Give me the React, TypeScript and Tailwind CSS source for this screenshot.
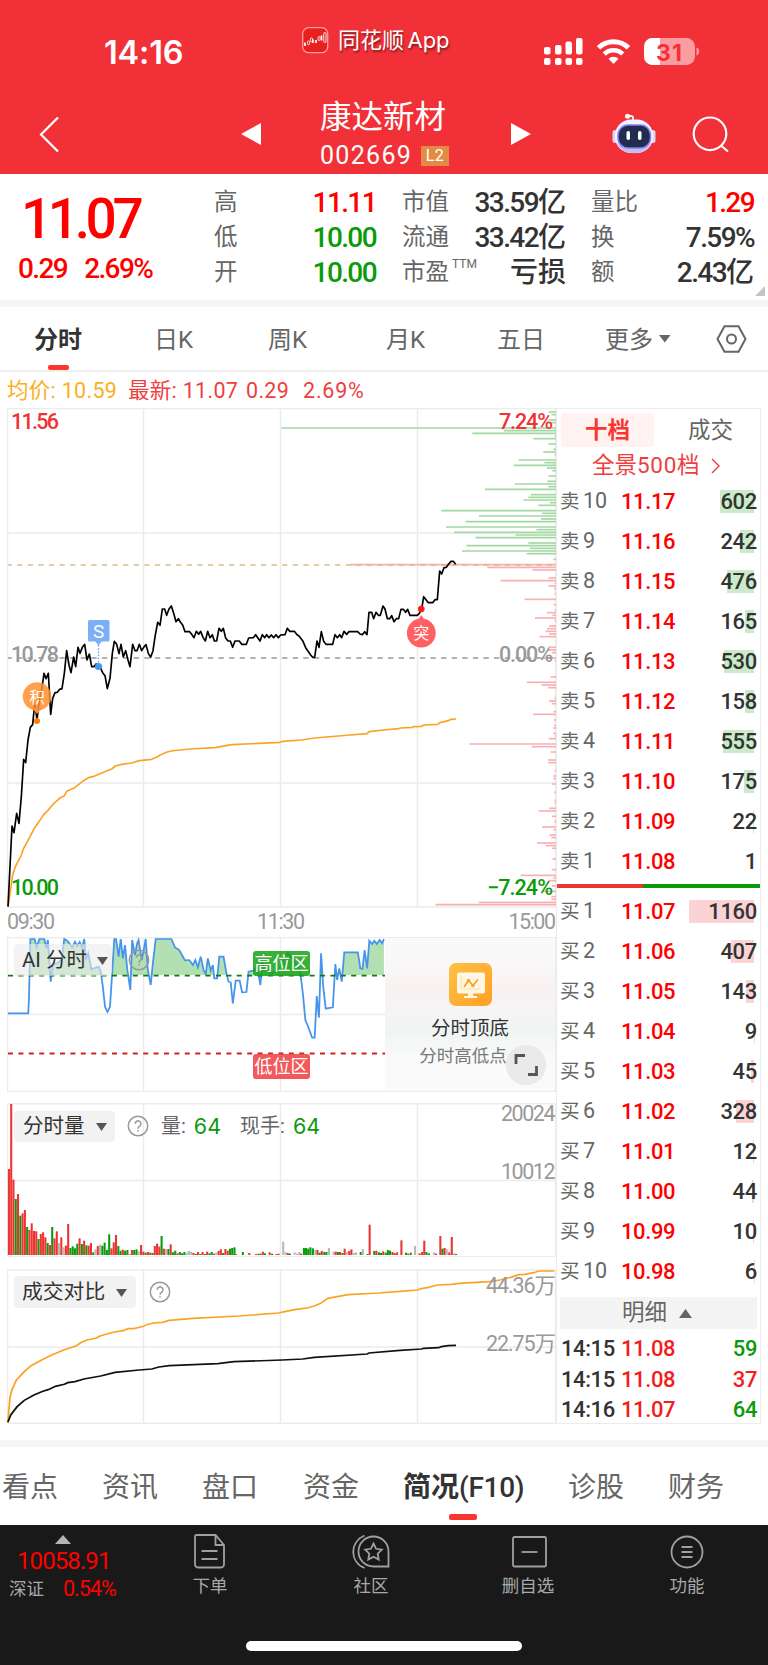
import React from 'react';

const PRICE_LINE =
  '24,1520 32,1360 36,1278 42,1298 50,1240 57,1270 64,1190 71,1078 77,1088 84,1020 91,982 98,974 104,910 111,958 118,900 125,870 132,820 138,836 145,820 152,943 158,895 165,878 172,877 179,868 186,866 193,820 200,752 207,795 213,818 221,771 227,800 234,742 240,760 247,742 254,733 261,780 268,762 275,800 282,800 288,792 295,795 302,805 308,818 315,827 322,866 330,835 337,760 343,724 350,733 357,761 363,733 370,771 377,752 384,780 390,800 398,733 405,752 411,752 418,733 425,752 431,742 438,734 445,760 452,772 459,752 466,705 473,667 480,676 487,627 494,627 500,646 507,627 514,618 521,640 528,665 535,656 541,666 548,675 555,695 569,695 575,703 582,713 589,694 596,703 602,694 609,712 616,723 623,694 630,713 637,704 643,723 650,723 657,685 664,694 670,685 677,714 684,723 691,723 698,742 705,723 718,723 725,733 739,733 746,714 760,713 767,704 780,723 787,704 794,713 800,704 807,713 814,705 821,713 828,704 835,713 842,705 855,704 862,685 869,694 883,694 890,703 897,708 908,722 917,743 932,765 938,772 944,772 951,723 957,742 964,695 971,724 978,733 998,733 1005,704 1012,713 1019,704 1025,713 1032,694 1040,703 1047,695 1073,695 1080,702 1087,704 1094,695 1101,704 1107,637 1115,637 1121,656 1128,637 1135,646 1141,646 1149,618 1155,627 1162,656 1169,656 1175,647 1182,665 1189,656 1196,656 1203,628 1210,628 1217,637 1223,628 1230,646 1252,646 1258,640 1265,627 1271,590 1278,599 1285,608 1298,608 1305,599 1312,599 1319,513 1325,522 1332,503 1339,502 1346,492 1353,484 1360,484 1367,493';

const AVG_LINE =
  '24,1520 33,1460 38,1425 45,1403 52,1388 62,1370 71,1345 90,1310 104,1283 117,1265 131,1244 145,1230 152,1221 165,1207 180,1194 193,1187 200,1174 224,1163 248,1144 268,1132 282,1129 318,1114 335,1107 346,1098 365,1093 395,1089 418,1082 455,1078 473,1070 480,1065 500,1057 512,1053 570,1047 645,1043 695,1034 840,1027 848,1024 905,1020 943,1014 1050,1005 1101,1001 1107,995 1150,990 1195,986 1203,984 1236,982 1242,980 1265,979 1272,975 1313,973 1320,968 1345,962 1353,958 1368,957';

const AI_LINE =
  '22,280 79,280 81,240 85,57 97,57 103,82 110,57 124,57 130,85 134,60 138,120 142,185 148,135 155,130 160,130 166,125 172,120 180,57 188,62 194,70 202,82 210,65 216,78 223,66 230,82 236,57 240,120 247,100 256,148 270,142 277,140 282,155 288,200 294,260 301,276 308,260 314,160 320,57 325,57 332,110 338,57 344,115 350,75 356,145 365,210 370,60 378,105 384,70 388,60 397,120 404,80 408,57 414,150 422,195 428,130 436,57 480,57 490,82 502,90 518,121 530,120 540,135 547,120 554,142 562,110 570,150 576,162 582,115 590,152 596,135 600,175 608,175 614,110 626,110 634,160 640,185 646,187 652,250 660,182 671,182 678,217 690,216 696,155 710,152 718,140 722,150 729,195 735,130 760,160 780,150 806,97 840,150 848,220 855,300 862,318 868,335 874,353 881,353 884,290 887,228 893,293 899,100 905,200 912,266 932,262 939,132 944,180 950,145 957,185 964,97 1002,97 1009,145 1015,147 1021,90 1028,145 1034,62 1042,72 1048,62 1055,72 1063,60 1070,70 1075,57';

const COMPARE_PREV =
  '22,487 28,412 34,388 46,360 66,337 86,318 118,299 145,285 180,269 214,257 228,247 244,240 270,234 280,228 320,216 345,212 358,206 375,206 402,199 410,194 430,189 455,187 474,181 540,175 670,168 780,159 800,154 830,148 860,144 880,138 898,130 918,115 975,104 1060,99 1120,94 1168,90 1180,86 1200,82 1225,75 1265,73 1285,70 1370,65 1400,60 1430,52 1453,44 1470,43 1495,38 1508,33 1552,33';

const COMPARE_TODAY =
  '22,487 30,465 48,440 68,421 95,405 120,394 135,389 155,379 180,373 190,368 210,365 235,357 282,348 322,337 390,330 425,327 445,321 474,317 610,311 655,305 790,300 848,297 880,292 1028,282 1033,279 1120,271 1180,267 1186,265 1228,263 1236,260 1255,257 1277,256';

// order queue bars: [y, left edge]
const SELL_DEPTH = [
  [36, 866], [44, 874], [60, 866], [68, 862], [84, 64], [92, 732], [100, 637], [108, 884], [116, 820], [132, 866], [148, 880], [156, 850], [164, 884],
  [180, 776], [188, 853], [196, 761], [204, 861], [212, 877], [228, 866], [244, 862], [252, 765], [260, 865], [268, 675], [284, 813], [292, 805],
  [300, 790], [308, 870], [316, 835], [332, 544], [340, 846], [348, 657], [357, 843], [365, 616], [381, 558], [389, 829], [397, 582], [405, 766],
  [413, 646], [429, 805], [437, 619], [445, 810], [453, 606], [461, 800], [478, 880],
];

const BUY_DEPTH = [
  [494, 270], [502, 682], [510, 818], [534, 866], [542, 722], [550, 884], [558, 866], [566, 882], [582, 884], [598, 794], [614, 881], [630, 884],
  [638, 861], [646, 877], [654, 825], [662, 884], [678, 867], [686, 861], [694, 857], [702, 867], [710, 838], [742, 864], [750, 862], [758, 875],
  [774, 846], [782, 884], [831, 872], [847, 800], [855, 845], [863, 865], [895, 884], [903, 867], [911, 876], [935, 880], [943, 819], [960, 882],
  [976, 882], [984, 880], [1000, 880], [1008, 884], [1016, 866], [1032, 628], [1040, 815], [1056, 872], [1080, 864], [1088, 865], [1112, 884],
  [1128, 880], [1136, 880], [1152, 875], [1177, 882], [1201, 884], [1209, 884], [1225, 867], [1233, 836], [1249, 876], [1265, 883], [1281, 846],
  [1289, 880], [1305, 868], [1313, 874], [1329, 831], [1337, 857], [1345, 876], [1377, 877], [1409, 875], [1426, 782], [1434, 880], [1442, 865],
  [1458, 876], [1474, 848], [1490, 874], [1498, 874], [1507, 656], [1514, 526],
];

// one bar per minute: colour + top
const VOLUME_OPEN =
  'r237 r42 r269 g327 r312 g377 r370 r360 g411 r420 r400 r423 r424 g447 r432 r427 r442 g459 r465 g411 r445 r424 n459 r442 n472 r467 r402 g474 g469 g475 g461 r445 g462 r452 g466 r467 r459 g487 n478 r468 n464 g467 g458 g480 g433 r475 r457 r435 g468 g482 r479 g482 g480 r493 r480 g480 g478 n484 r465 r485 g488 r486 r488 g489 r468 r461 r470 g438 r476 n477 g477 r463 g487 g482 r490 g486 g490 g486 n488 n483 n485 r489 g492 r486 g492 r486 g492 r485 g490 g486 r491 n488 r483 r478 g489 r477 r482 g476 g474 g472'.split(' ');

const VOLUME_REST: [number, string][] = [
  [660, 'r492'], [680, 'g486'], [698, 'r489'], [717, 'r492'], [724, 'g491'], [730, 'r491'], [736, 'r485'], [742, 'g490'], [755, 'r487'], [762, 'g491'], [774, 'r492'], [780, 'r491'], [793, 'n455'], [800, 'n486'],
  [806, 'r489'], [812, 'g491'], [825, 'n487'], [832, 'n491'], [838, 'n486'], [843, 'r491'], [851, 'g474'], [857, 'g474'], [863, 'g476'], [869, 'g472'], [876, 'g475'], [883, 'n480'], [889, 'r480'],
  [895, 'g488'], [901, 'r483'], [908, 'g486'], [914, 'g486'], [921, 'n474'], [934, 'n485'], [940, 'r485'], [946, 'g486'], [952, 'r486'], [959, 'g489'], [965, 'r476'], [972, 'n486'], [978, 'r483'],
  [984, 'r478'], [991, 'n489'], [997, 'n487'], [1010, 'g486'], [1016, 'n477'], [1029, 'g492'], [1035, 'r404'], [1048, 'g483'], [1054, 'r482'], [1061, 'g487'], [1067, 'g489'], [1073, 'r484'], [1080, 'g488'],
  [1086, 'g480'], [1092, 'g482'], [1099, 'r486'], [1105, 'r489'], [1112, 'r487'], [1124, 'r451'], [1137, 'g488'], [1143, 'r491'], [1150, 'g488'], [1162, 'n468'], [1175, 'r490'], [1182, 'r486'],
  [1188, 'r452'], [1194, 'g486'], [1201, 'g490'], [1215, 'n487'], [1221, 'r491'], [1233, 'r438'], [1239, 'g476'], [1245, 'r474'], [1251, 'n478'], [1258, 'r487'], [1265, 'r441'], [1271, 'n490'], [1277, 'g492'],
];

const VOLUME = [...VOLUME_OPEN.map((v, i): [number, string] => [25 + i * 6.38, v]), ...VOLUME_REST];

const BAR_COLORS: Record<string, string> = { r: '#ee3333', g: '#0a9a0a', n: '#b8b8b8' };

const sells: [number, string, number][] = [
  [10, '11.17', 602], [9, '11.16', 242], [8, '11.15', 476], [7, '11.14', 165], [6, '11.13', 530],
  [5, '11.12', 158], [4, '11.11', 555], [3, '11.10', 175], [2, '11.09', 22], [1, '11.08', 1],
];

const buys: [number, string, number][] = [
  [1, '11.07', 1160], [2, '11.06', 407], [3, '11.05', 143], [4, '11.04', 9], [5, '11.03', 45],
  [6, '11.02', 328], [7, '11.01', 12], [8, '11.00', 44], [9, '10.99', 10], [10, '10.98', 6],
];

const details = [
  { time: '14:15', price: '11.08', qty: '59', color: 'text-[#0a9a0a]' },
  { time: '14:15', price: '11.08', qty: '37', color: 'text-[#f41c1c]' },
  { time: '14:16', price: '11.07', qty: '64', color: 'text-[#0a9a0a]' },
];

const StatusBar = () => (
  <div className="flex h-[90px] items-start text-white">
    <div className="ml-[104px] mt-[33px] w-[198px] font-[Inter] text-[32.5px] font-semibold leading-[40px] tracking-[-0.2px]">14:16</div>
    <svg className="mt-[27px]" width="27" height="27" viewBox="0 0 27 27" fill="none">
      <rect x="0.7" y="0.7" width="25" height="25" rx="6" fill="#e8201f" stroke="#f9a09f" strokeWidth="1.3" />
      <path d="M3 15.500v3.500M11 12.500v3.500M14 13v3M19.500 8.500v5" stroke="#fff" strokeWidth="1.700" />
      <rect x="5.600" y="13.800" width="2" height="4" rx="1" stroke="#fff" strokeWidth="0.800" />
      <rect x="8.500" y="10.800" width="2" height="4" rx="1" stroke="#fff" strokeWidth="0.800" />
      <rect x="16" y="9.500" width="2" height="4" rx="1" stroke="#fff" strokeWidth="0.800" />
      <rect x="21.800" y="5.500" width="2.200" height="10" rx="1.100" stroke="#fff" strokeWidth="0.900" />
    </svg>
    <div className="ml-[9px] mt-[24px] w-[206px] whitespace-nowrap text-[22px] leading-[32px] [text-shadow:1px_2px_2px_rgba(0,0,0,0.45)]">
      同花顺 <span className="-ml-0.5 font-[Inter] tracking-[0px]">App</span>
    </div>
    <svg className="mt-[36px]" width="160" height="32" viewBox="0 0 160 32">
      <g fill="#fff">
        <rect x="0" y="11" width="6.500" height="7.500" rx="2" />
        <rect x="11" y="9" width="6.500" height="9.500" rx="2" />
        <rect x="21.500" y="5.500" width="6.500" height="13" rx="2" />
        <rect x="32" y="2" width="6.500" height="16.500" rx="2" />
        <rect x="0" y="22" width="6.500" height="7" rx="2" />
        <rect x="11" y="22" width="6.500" height="7" rx="2" />
        <rect x="21.500" y="22" width="6.500" height="7" rx="2" />
        <rect x="32" y="22" width="6.500" height="7" rx="2" />
      </g>
      <g fill="none" stroke="#fff" strokeWidth="5">
        <path d="M54.500 11.800a21.500 21.500 0 0 1 30 0" />
        <path d="M60.300 18a13 13 0 0 1 18.400 0" strokeWidth="4.600" />
      </g>
      <path d="M69.500 28l-5-5.200a7 7 0 0 1 10 0z" fill="#fff" />
      <rect x="100" y="2" width="51" height="27" rx="8.500" fill="#f99da0" />
      <path d="M108.500 2H116v27h-7.500a8.500 8.500 0 0 1-8.500-8.500v-10a8.500 8.500 0 0 1 8.500-8.500z" fill="#fff" />
      <path d="M152.500 11.500c3.600 1 3.600 7 0 8z" fill="#f99da0" />
      <text x="125" y="24.500" textAnchor="middle" fill="#f23037" className="font-[Inter] text-[23px] font-bold" textLength="26">31</text>
    </svg>
  </div>
);

const Robot = () => (
  <svg width="44" height="42" viewBox="0 0 44 42">
    <path d="M21 8V4.500Q21 2.500 16 3" fill="none" stroke="#fff" strokeWidth="1.800" />
    <circle cx="15.500" cy="3.300" r="2.500" fill="#fff" />
    <rect x="0.500" y="17" width="5" height="13" rx="2.500" fill="#d8d8f6" />
    <rect x="38.500" y="17" width="5" height="13" rx="2.500" fill="#d8d8f6" />
    <rect x="3" y="6.500" width="38" height="33.500" rx="16" fill="#f3f2ff" />
    <path d="M5 29c5 8 29 8 34 0-3 15-31 15-34 0z" fill="#bfc0ee" />
    <rect x="6" y="12" width="32.500" height="23" rx="10" fill="#222b50" stroke="#8a7bf0" strokeWidth="1.500" />
    <rect x="14.500" y="18" width="3.500" height="9" rx="1.700" fill="#fff" />
    <rect x="26" y="18" width="3.500" height="9" rx="1.700" fill="#fff" />
  </svg>
);

const Header = () => (
  <header className="h-[174px] bg-[#f23037]">
    <StatusBar />
    <div className="flex h-[84px] items-start text-white">
      <svg className="ml-[39px] mt-[26px]" width="20" height="37" viewBox="0 0 20 37" fill="none">
        <path d="M19 1.500L2 18.500l17 17" stroke="#fff" strokeWidth="2.200" />
      </svg>
      <svg className="ml-[182px] mt-[33px]" width="20" height="22" viewBox="0 0 20 22"><path d="M20 0v22L0 11z" fill="#fff" /></svg>
      <div className="ml-[59px] w-[180px]">
        <div className="mt-[9px] text-[31.5px] leading-[38px]">康达新材</div>
        <div className="mt-[5px] flex h-[28px] items-center">
          <span className="w-[101px] text-[25px] tracking-[1.3px]">002669</span>
          <span className="flex h-[20px] w-[28px] items-center justify-center bg-[#e28b45] text-[16px] tracking-[0.5px]">L2</span>
        </div>
      </div>
      <svg className="ml-[11px] mt-[33px]" width="20" height="22" viewBox="0 0 20 22"><path d="M0 0v22l20-11z" fill="#fff" /></svg>
      <div className="ml-[81px] mt-[23px]"><Robot /></div>
      <svg className="ml-[36px] mt-[26px]" width="38" height="38" viewBox="0 0 38 38" fill="none" stroke="#fff" strokeWidth="2.200">
        <circle cx="18" cy="17.800" r="16.300" />
        <path d="M29 29.500l7 6" />
      </svg>
    </div>
  </header>
);

interface StatProps {
  label: React.ReactNode;
  value: string;
  unit?: string;
  color?: string;
}

const Stat = ({ label, value, unit, color = 'text-[#333]' }: StatProps) => (
  <div className="flex h-[35.300px] items-center justify-between">
    <span className="text-[23.5px] text-[#666]">{label}</span>
    <span className={`text-[28px] font-medium tracking-[-1.6px] ${color}`}>
      {value}
      {unit && <span className="tracking-[0px]">{unit}</span>}
    </span>
  </div>
);

const QuotePanel = () => (
  <section className="relative flex h-[126px] pt-[10px] leading-[35px]">
    <div className="w-[214px] text-[#ff0000]">
      <div className="ml-[21px] mt-[7px] text-[55px] font-medium leading-[56px] tracking-[-4.400px]">11.07</div>
      <div className="ml-[18px] mt-[4px] flex gap-[17px] text-[28px] font-medium tracking-[-1.6px]">
        <span>0.29</span>
        <span>2.69%</span>
      </div>
    </div>
    <div className="mt-[0.500px] w-[162px]">
      <Stat label="高" value="11.11" color="text-[#ff0000]" />
      <Stat label="低" value="10.00" color="text-[#0a9a0a]" />
      <Stat label="开" value="10.00" color="text-[#0a9a0a]" />
    </div>
    <div className="ml-[26px] mt-[0.500px] w-[164px]">
      <Stat label="市值" value="33.59" unit="亿" />
      <Stat label="流通" value="33.42" unit="亿" />
      <Stat label={<>市盈<sup className="-top-[12px] ml-[3px] text-[12px]">TTM</sup></>} value="" unit="亏损" />
    </div>
    <div className="ml-[25px] mt-[0.500px] w-[163px]">
      <Stat label="量比" value="1.29" color="text-[#ff0000]" />
      <Stat label="换" value="7.59%" />
      <Stat label="额" value="2.43" unit="亿" />
    </div>
    <svg className="absolute bottom-[4px] right-[3px]" width="10" height="10"><path d="M10 0v10H0z" fill="#c4c4c4" /></svg>
  </section>
);

const PeriodTabs = () => (
  <nav className="flex h-[65px] items-center border-b-2 border-[#efefef] text-[24px] text-[#666]">
    <div className="relative ml-[34px] flex h-full w-[120px] items-center pt-[3px] font-bold text-[#333]">
      分时
      <span className="absolute bottom-0 left-[14px] h-[5px] w-[21px] rounded-[2px] bg-[#fa372e]" />
    </div>
    <span className="w-[114px] pt-[3px]">日K</span>
    <span className="w-[118px] pt-[3px]">周K</span>
    <span className="w-[111px] pt-[3px]">月K</span>
    <span className="w-[108px] pt-[3px]">五日</span>
    <span className="pt-[3px]">更多</span>
    <svg className="ml-[6px]" width="12" height="8"><path d="M0 0h11.500L5.800 7.500z" fill="#666" /></svg>
    <svg className="ml-[45px]" width="31" height="28" viewBox="0 0 31 28" fill="none" stroke="#666" strokeWidth="2">
      <path d="M8.500 1.200h14l7 12.800-7 12.800h-14L1.500 14z" />
      <circle cx="15.500" cy="14" r="4.500" />
    </svg>
  </nav>
);

const Arrow = () => (
  <svg width="11" height="8"><path d="M0 0h11L5.500 8z" fill="#555" /></svg>
);

const Help = () => (
  <svg width="22" height="22" viewBox="0 0 22 22" fill="none" stroke="#999" strokeWidth="1.500">
    <circle cx="11" cy="11" r="9.700" />
    <path d="M8.200 8.700a2.900 2.900 0 1 1 4.300 2.600c-1 .6-1.500 1.100-1.500 2.400M11 15.300v1.400" />
  </svg>
);

const PriceChart = () => (
  <svg className="block" width="549" height="528" viewBox="7 408 549 528" fontFamily="Roboto, sans-serif" fontSize="21.5">
    <g stroke="#ececec" strokeWidth="1.500" fill="none">
      <rect x="7.500" y="408.500" width="548" height="498.500" />
      <path d="M143.500 408v499M280.500 408v499M417.500 408v499M7 533h549M7 783h549" />
    </g>
    <g transform="translate(260 400) scale(0.33333)" strokeWidth="5">
      {SELL_DEPTH.map(([y, x]) => <path key={y} d={`M${x} ${y}H888`} stroke="#a2d9a2" />)}
      {BUY_DEPTH.map(([y, x]) => <path key={y} d={`M${x} ${y}H888`} stroke="#f9b0b2" />)}
    </g>
    <path d="M8 565h548" stroke="#dcb98a" strokeWidth="1.300" strokeDasharray="5.300 5.300" strokeDashoffset="1.500" />
    <path d="M8 658h548" stroke="#999" strokeWidth="1.500" strokeDasharray="5.300 5.300" strokeDashoffset="1.500" />
    <g transform="translate(0 400) scale(0.33333)" fill="none" strokeLinejoin="round">
      <polyline points={AVG_LINE} stroke="#fca326" strokeWidth="5" />
      <polyline points={PRICE_LINE} stroke="#000" strokeWidth="5" />
    </g>
    <g>
      <rect x="88" y="620" width="21.500" height="21.500" rx="1.500" fill="#7caff5" />
      <path d="M95 641h7l-3.500 4.500z" fill="#7caff5" />
      <path d="M98.500 645v18" stroke="#5b9ff5" strokeWidth="1.300" strokeDasharray="1.500 1.700" />
      <circle cx="98.500" cy="666.500" r="3.600" fill="#4a94f2" />
      <text x="98.700" y="638" textAnchor="middle" fill="#fff" fontSize="19">S</text>
    </g>
    <g>
      <circle cx="37" cy="696.500" r="14.200" fill="#ff8f2e" fillOpacity="0.850" />
      <path d="M32 708h10l-5 6z" fill="#ff8f2e" />
      <circle cx="37" cy="721" r="3" fill="#ff7a0a" />
      <text x="37" y="702.500" textAnchor="middle" fill="#fff" fontSize="15.500" fontFamily="Noto Sans CJK SC">积</text>
    </g>
    <g>
      <circle cx="421.300" cy="609" r="3.300" fill="#f81d1d" />
      <path d="M421.300 615l4 6h-8z" fill="#ff6064" />
      <circle cx="421.300" cy="633" r="14.400" fill="#ff6064" />
      <text x="421.300" y="639" textAnchor="middle" fill="#fff" fontSize="16" fontFamily="Noto Sans CJK SC">突</text>
    </g>
    <g fontWeight="500">
      <text x="11" y="429" fill="#ee3333" textLength="48">11.56</text>
      <text x="499" y="429" fill="#ee3333" textLength="54">7.24%</text>
      <text x="11" y="662" fill="#999" textLength="48">10.78</text>
      <text x="499" y="662" fill="#999" textLength="54">0.00%</text>
      <text x="11" y="895" fill="#0a9a0a" textLength="48">10.00</text>
      <text x="487" y="895" fill="#0a9a0a" textLength="66">−7.24%</text>
    </g>
    <g fill="#999">
      <text x="7" y="929" textLength="48">09:30</text>
      <text x="257" y="929" textLength="48">11:30</text>
      <text x="508.500" y="929" textLength="47.500">15:00</text>
    </g>
  </svg>
);

const AiChart = () => (
  <div className="relative h-[155px]">
    <svg className="block" width="549" height="155" viewBox="7 937 549 155">
      <defs>
        <clipPath id="highZone"><rect x="20" y="50" width="1060" height="116" /></clipPath>
      </defs>
      <g stroke="#ececec" strokeWidth="1.500" fill="none">
        <rect x="7.500" y="937.500" width="548" height="154" />
        <path d="M143.500 937v155M280.500 937v155M7 1014.500h379" />
      </g>
      <g transform="translate(0 920) scale(0.35714 0.33333)">
        <polygon points={`22,166 ${AI_LINE} 1075,166`} fill="#b3e0b3" clipPath="url(#highZone)" />
        <polyline points={AI_LINE} fill="none" stroke="#4794ec" strokeWidth="5" />
      </g>
      <path d="M8 975.600h377" stroke="#117a11" strokeWidth="1.800" strokeDasharray="5 5.400" />
      <path d="M8 1053.500h377" stroke="#d02424" strokeWidth="1.800" strokeDasharray="5 5.400" />
    </svg>
    <div className="absolute left-[7px] top-[7px] flex h-[32px] w-[98px] items-center gap-[10px] rounded bg-[#ebebeb]/60 pl-[8px] pt-px text-[20.5px] text-[#333]">
      <span className="whitespace-nowrap">AI 分时</span>
      <Arrow />
    </div>
    <div className="absolute left-[121px] top-[12px]"><Help /></div>
    <div className="absolute left-[246px] top-[14px] h-[25px] w-[57px] rounded-[3px] bg-[#16a316]/85 text-center text-[18px] leading-[25px] text-white">高位区</div>
    <div className="absolute left-[246px] top-[117px] h-[25px] w-[57px] rounded-[3px] bg-[#f0474b]/90 text-center text-[18px] leading-[25px] text-white">低位区</div>
    <div className="absolute left-[378px] top-px flex h-[153px] w-[170px] flex-col items-center bg-[linear-gradient(180deg,#fafafa_0%,#f9f7f7_20%,#f9f1f1_35%,#f5f5f5_48%,#eff5f2_60%,#fafafa_80%)]">
      <svg className="mt-[25px]" width="43" height="43" viewBox="0 0 43 43">
        <defs>
          <linearGradient id="tile" x1="0" y1="0" x2="1" y2="1">
            <stop offset="0" stopColor="#ffc247" />
            <stop offset="1" stopColor="#ff9f24" />
          </linearGradient>
        </defs>
        <rect width="43" height="43" rx="7" fill="url(#tile)" />
        <rect x="8" y="9.500" width="28" height="21" rx="2.500" fill="#fff7e6" />
        <path d="M19 30h5v3h4v2H15v-2h4z" fill="#fff7e6" />
        <path d="M12 13v13h20" fill="none" stroke="#ffdf9e" strokeWidth="1" />
        <path d="M15 24l4.500-6.500 4.500 5 5-6" fill="none" stroke="#ffa228" strokeWidth="1.800" />
        <circle cx="19.500" cy="17.500" r="1.800" fill="#ffa228" />
        <circle cx="24" cy="22.500" r="1.800" fill="#ffa228" />
      </svg>
      <div className="mt-[9px] text-[19.5px] leading-[28px] text-[#333]">分时顶底</div>
      <div className="mr-[14px] text-[17.5px] leading-[26px] text-[#777]">分时高低点</div>
    </div>
    <svg className="absolute left-[498px] top-[107px]" width="42" height="42" viewBox="0 0 42 42">
      <circle cx="21" cy="21" r="20.300" fill="#e6e6e6" fillOpacity="0.850" />
      <path d="M11 20v-8.500h9M23 30.500h8.500V22" fill="none" stroke="#555" strokeWidth="2.800" />
    </svg>
  </div>
);

const VolumeChart = () => (
  <div className="relative mt-[11px] h-[154px]">
    <svg className="block" width="549" height="154" viewBox="7 1103 549 154" fontFamily="Roboto, sans-serif" fontSize="21.5">
      <g stroke="#ececec" strokeWidth="1.500" fill="none">
        <rect x="7.500" y="1103.700" width="548" height="153" />
        <path d="M143.500 1103v154M280.500 1103v154M417.500 1103v154M7 1180.500h549" />
      </g>
      <g transform="translate(0 1090) scale(0.35714 0.33333)">
        {VOLUME.map(([x, v], i) => (
          <rect key={i} x={x - 2.9} y={Number(v.slice(1))} width="5.800" height={495 - Number(v.slice(1))} fill={BAR_COLORS[v[0]]} />
        ))}
      </g>
      <text x="501" y="1121" fill="#999" textLength="54.500">20024</text>
      <text x="501" y="1179" fill="#999" textLength="54.500">10012</text>
    </svg>
    <div className="absolute left-[7px] top-[7px] flex h-[32px] items-center text-[20px]">
      <div className="flex h-[31px] w-[101px] items-center gap-[11px] rounded bg-[#f2f2f2] pl-[9px] pt-px text-[20.5px] text-[#333]">
        分时量 <Arrow />
      </div>
      <div className="ml-[12px]"><Help /></div>
      <span className="ml-[12px] text-[#666]">量:</span>
      <span className="ml-[8px] font-[Inter] text-[21.5px] text-[#0a9a0a]">64</span>
      <span className="ml-[19px] text-[#666]">现手:</span>
      <span className="ml-[8px] font-[Inter] text-[21.5px] text-[#0a9a0a]">64</span>
    </div>
  </div>
);

const CompareChart = () => (
  <div className="relative mt-[12px] h-[155px]">
    <svg className="block" width="549" height="155" viewBox="7 1269 549 155" fontFamily="Roboto, 'Noto Sans CJK SC', sans-serif" fontSize="21.5">
      <g stroke="#ececec" strokeWidth="1.500" fill="none">
        <rect x="7.500" y="1270" width="548" height="153.300" />
        <path d="M143.500 1270v153M280.500 1270v153M417.500 1270v153M7 1347h549" />
      </g>
      <g transform="translate(0 1260) scale(0.35714 0.33333)" fill="none" strokeWidth="5">
        <polyline points={COMPARE_PREV} stroke="#fca326" />
        <polyline points={COMPARE_TODAY} stroke="#111" />
      </g>
      <text x="486" y="1293" fill="#999" textLength="70">44.36万</text>
      <text x="486" y="1351" fill="#999" textLength="70">22.75万</text>
    </svg>
    <div className="absolute left-[7px] top-[7px] flex h-[32px] items-center">
      <div className="flex h-[32px] w-[122px] items-center gap-[11px] rounded bg-[#f2f2f2] pl-[8px] pt-px text-[20.8px] text-[#333]">
        成交对比 <Arrow />
      </div>
      <div className="ml-[13px]"><Help /></div>
    </div>
  </div>
);

interface LevelProps {
  side: '卖' | '买';
  level: [number, string, number];
}

const Level = ({ side, level: [no, price, qty] }: LevelProps) => (
  <div className="relative flex h-[40px] items-center pl-[3px] pr-[3px] text-[22px]">
    <span className="w-[23px] pt-px text-[19.5px] text-[#666]">{side}</span>
    <span className="w-[38px] text-[21.5px] text-[#666]">{no}</span>
    <span className="font-medium tracking-[-0.400px] text-[#ff0000]">{price}</span>
    <span
      className={`absolute right-[6px] h-[23px] ${side === '卖' ? 'bg-[#c9ebc9]' : 'bg-[#fcd3d4]'}`}
      style={{ width: (qty / 1160) * 65 }}
    />
    <span className="relative ml-auto font-medium tracking-[-0.300px] text-[#333]">{qty}</span>
  </div>
);

const OrderBook = () => (
  <aside className="h-[1016px] w-[205px] border-[1.500px] border-[#ececec]">
    <div className="flex h-[38px] items-end pl-[4px] text-[22.5px]">
      <span className="flex h-[34px] w-[93px] items-center justify-center rounded bg-[#fff2f1] pt-px font-bold text-[#fa372e]">十档</span>
      <span className="ml-[34px] flex h-[34px] items-center pt-px text-[#666]">成交</span>
    </div>
    <div className="flex h-[34px] items-center pl-[35px] pt-[4px] text-[22.5px] text-[#ee3e3e]">
      全景<span className="tracking-[0.700px]">500</span>档
      <svg className="ml-[11px]" width="9" height="16" fill="none"><path d="M1 1l7 7-7 7" stroke="#ee3e3e" strokeWidth="1.400" /></svg>
    </div>
    {sells.map(l => <Level key={l[0]} side="卖" level={l} />)}
    <div className="mb-[3px] mt-[3px] flex h-[4px]">
      <div className="w-[86px] bg-[#ee3333]" />
      <div className="flex-1 bg-[#0a9a0a]" />
    </div>
    {buys.map(l => <Level key={l[0]} side="买" level={l} />)}
    <div className="mx-[3px] mt-[6px] flex h-[32px] items-center justify-center gap-[12px] bg-[#f4f4f4] pr-[3px] text-[22.5px] text-[#666]">
      明细
      <svg width="13" height="9"><path d="M6.500 0L13 9H0z" fill="#666" /></svg>
    </div>
    <div className="mt-[4.500px]">
      {details.map((d, i) => (
        <div key={i} className="flex h-[30.400px] items-center pl-[4px] pr-[3px] text-[22px] font-medium tracking-[-0.400px]">
          <span className="w-[60px] text-[#333]">{d.time}</span>
          <span className="text-[#f41c1c]">{d.price}</span>
          <span className={`ml-auto ${d.color}`}>{d.qty}</span>
        </div>
      ))}
    </div>
  </aside>
);

const InfoTabs = () => (
  <nav className="flex h-[78px] items-center whitespace-nowrap pl-[2px] text-[28px] text-[#666]">
    <span className="w-[100px] pt-[4px]">看点</span>
    <span className="w-[100px] pt-[4px]">资讯</span>
    <span className="w-[101px] pt-[4px]">盘口</span>
    <span className="w-[100px] pt-[4px]">资金</span>
    <div className="relative flex h-full w-[165px] items-center pt-[4px] font-bold text-[#333]">
      简况<span className="font-medium tracking-[-0.300px]">(F10)</span>
      <span className="absolute bottom-[5px] left-[46px] h-[6px] w-[28px] rounded-[2px] bg-[#fa372e]" />
    </div>
    <span className="w-[100px] pt-[4px]">诊股</span>
    <span className="pt-[4px]">财务</span>
  </nav>
);

const BottomBar = () => (
  <footer className="flex h-[140px] flex-col bg-[#191919] text-[17.5px] text-[#a8a8a8]">
    <div className="flex h-[116px] items-start leading-[26px]">
      <div className="w-[127px]">
        <svg className="ml-[55px] mt-[10px]" width="16" height="9"><path d="M8 0l8 9H0z" fill="#b4b4b4" /></svg>
        <div className="ml-[17px] mt-[4px] text-[24px] leading-[26px] tracking-[-0.900px] text-[#ff0000]">10058.91</div>
        <div className="ml-[9px] mt-[2px] flex">
          深证
          <span className="ml-[19px] text-[21.500px] tracking-[-1px] text-[#ff0000]">0.54%</span>
        </div>
      </div>
      <div className="ml-[29px] mt-[9px] flex w-[108px] flex-col items-center">
        <svg width="34" height="35" viewBox="0 0 34 35" fill="none" stroke="#a0a0a0" strokeWidth="1.800">
          <path d="M3.500 1h19l8.500 10v19.500a3 3 0 0 1-3 3H5a3 3 0 0 1-3-3V2.500A1.500 1.500 0 0 1 3.500 1zM22.500 1v10H31M8.500 17h16M8.500 25h16" />
        </svg>
        <span className="mt-[4px]">下单</span>
      </div>
      <div className="ml-[53px] mt-[9px] flex w-[108px] flex-col items-center">
        <svg width="38" height="35" viewBox="0 0 38 35" fill="none" stroke="#a0a0a0" strokeWidth="1.800">
          <path d="M12.500 1.500C-2.500 8 -2.500 28 12.500 34" />
          <path d="M36.500 32.500V17.500a15 15 0 1 0-15 15z" />
          <path d="M21.500 9.500l2.600 5.300 5.700.8-4.100 4.100 1 5.800-5.200-2.800-5.200 2.800 1-5.800-4.100-4.100 5.700-.8z" />
        </svg>
        <span className="mt-[4px]">社区</span>
      </div>
      <div className="ml-[49px] mt-[9px] flex w-[108px] flex-col items-center">
        <svg className="translate-x-px" width="36" height="35" viewBox="0 0 36 35" fill="none" stroke="#a0a0a0" strokeWidth="1.800">
          <rect x="2" y="3" width="33" height="29.500" rx="1.500" />
          <path d="M10.500 18h16" />
        </svg>
        <span className="mt-[4px]">删自选</span>
      </div>
      <div className="ml-[51px] mt-[9px] flex w-[108px] flex-col items-center">
        <svg width="34" height="35" viewBox="0 0 34 35" fill="none" stroke="#a0a0a0" strokeWidth="1.800">
          <circle cx="17" cy="18" r="15.500" />
          <path d="M11.500 13h11M11.500 18h11M11.500 23h11" />
        </svg>
        <span className="mt-[4px]">功能</span>
      </div>
    </div>
    <div className="ml-[246px] h-[10px] w-[276px] rounded-full bg-white" />
  </footer>
);

const App: React.FC = () => {
  return (
    <div className="h-[1665px] w-[768px] overflow-hidden bg-white font-[Roboto,'Noto_Sans_CJK_SC',sans-serif]">
      <Header />
      <QuotePanel />
      <div className="h-[7px] bg-[#f5f5f5]" />
      <PeriodTabs />
      <div className="flex h-[36px] items-center pl-[7px] pt-[2px] text-[21.5px] tracking-[0.300px] text-[#ee3e3e]">
        <span className="w-[121px] text-[#fbaf1e]">均价: 10.59</span>
        <span className="w-[118px]">最新: 11.07</span>
        <span className="w-[57px]">0.29</span>
        <span className="tracking-[0.800px]">2.69%</span>
      </div>
      <main className="flex h-[1032px] pl-[7px]">
        <div className="w-[549px]">
          <PriceChart />
          <div className="h-px" />
          <AiChart />
          <VolumeChart />
          <CompareChart />
        </div>
        <OrderBook />
      </main>
      <div className="h-[7px] bg-[#f5f5f5]" />
      <InfoTabs />
      <BottomBar />
    </div>
  );
};

export default App;
